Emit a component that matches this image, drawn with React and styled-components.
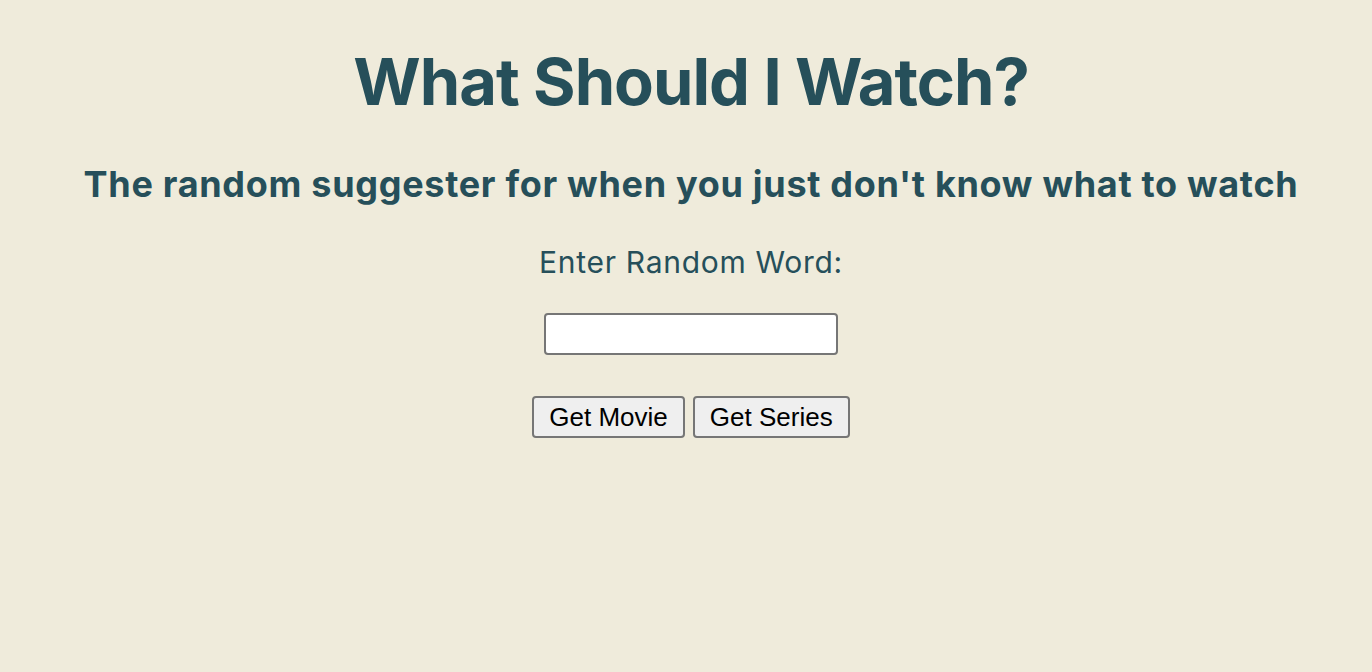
import React from 'react';
import styled, {createGlobalStyle} from 'styled-components';

const GlobalStyle = createGlobalStyle`
  body {
    margin: 0;
    background: #efebdb;
    font-family: Inter, "Noto Sans", sans-serif;
  }
`;

const Page = styled.div`
  min-height: 100vh;
  box-sizing: border-box;
  padding-left: 10px;
  display: flex;
  flex-direction: column;
  align-items: center;
  color: #264f5a;
  text-align: center;
`;

const Title = styled.h1`
  margin: 44px 0 0;
  font-size: 65px;
  font-weight: 700;
  letter-spacing: -1px;
  line-height: 76px;
`;

const SubTitle = styled.h2`
  margin: 44px 0 0;
  font-size: 36px;
  font-weight: 700;
  letter-spacing: 0.7px;
  line-height: 40px;
`;

const Form = styled.form`
  display: flex;
  flex-direction: column;
  align-items: center;
`;

const Label = styled.label`
  margin-top: 40px;
  font-size: 30px;
  letter-spacing: 0.7px;
  line-height: 36px;
`;

const Input = styled.input`
  margin-top: 33px;
  width: 294px;
  height: 42px;
  box-sizing: border-box;
  border: 2px solid #767676;
  border-radius: 4px;
  background: #fff;
  font-size: 20px;
`;

const Buttons = styled.div`
  display: flex;
  gap: 8px;
  margin-top: 41px;
`;

const Button = styled.button`
  height: 42px;
  padding: 0 15px;
  box-sizing: border-box;
  border: 2px solid #767676;
  border-radius: 4px;
  background: #efefef;
  color: #000;
  font-family: "Liberation Sans", Arial, sans-serif;
  font-size: 26px;
`;

export default function App() {
    return (
        <Page>
            <GlobalStyle />
            <Title>What Should I Watch?</Title>
            <SubTitle>The random suggester for when you just don't know what to watch</SubTitle>
            <Form onSubmit={e => e.preventDefault()}>
                <Label htmlFor="word">Enter Random Word:</Label>
                <Input id="word" type="text" />
                <Buttons>
                    <Button type="button">Get Movie</Button>
                    <Button type="button">Get Series</Button>
                </Buttons>
            </Form>
        </Page>
    );
}
